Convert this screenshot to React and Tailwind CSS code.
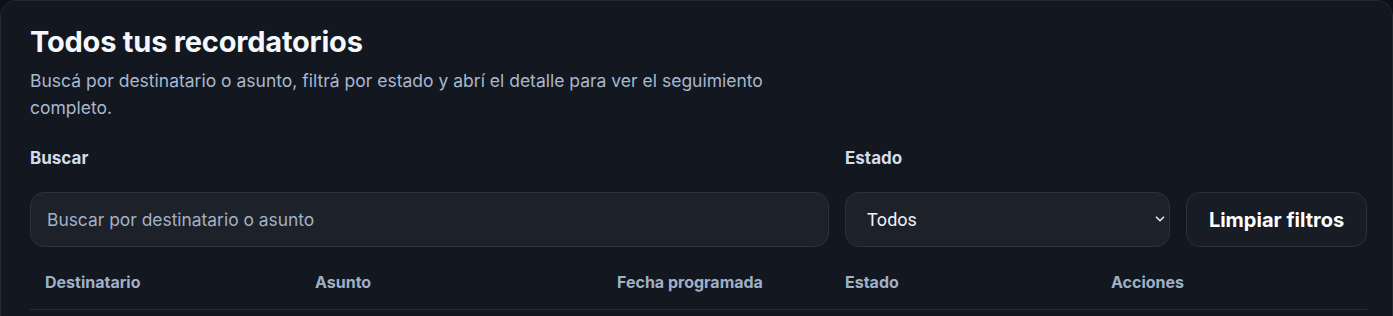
import React, { useState } from "react";
import { ChevronDown } from "lucide-react";

const columns = [
  { label: "Destinatario", width: "w-[270px]" },
  { label: "Asunto", width: "w-[302px]" },
  { label: "Fecha programada", width: "w-[228px]" },
  { label: "Estado", width: "w-[266px]" },
  { label: "Acciones", width: "" },
];

const App = () => {
  const [query, setQuery] = useState("");
  const [status, setStatus] = useState("todos");

  const clearFilters = () => {
    setQuery("");
    setStatus("todos");
  };

  return (
    <div className="h-[316px] overflow-hidden bg-[#0d1017] font-['Inter','Liberation_Sans',sans-serif]">
      <section className="min-h-[340px] rounded-2xl border border-[#232833] bg-[#121720] pl-[29px] pr-[25px] pt-[23px]">
        <h1 className="text-[29px] font-bold leading-[36px] tracking-[-0.2px] text-[#f5f7fb]">
          Todos tus recordatorios
        </h1>
        <p className="mt-[7px] max-w-[768px] text-[17.5px] leading-[27px] text-[#a9b8ce]">
          Buscá por destinatario o asunto, filtrá por estado y abrí el detalle para ver el seguimiento
          completo.
        </p>

        <div className="mt-[26px] flex items-end gap-4">
          <div className="flex w-[799px] flex-col">
            <label className="text-[17px] font-bold leading-[22px] text-[#d3dceb]">Buscar</label>
            <input
              value={query}
              onChange={(e) => setQuery(e.target.value)}
              placeholder="Buscar por destinatario o asunto"
              className="mt-[23px] h-[55px] rounded-[14px] border border-[#2c313c] bg-[#1d212a] px-4 text-[17.4px] text-[#e2e8f0] outline-none placeholder:text-[#a3b1c6]"
            />
          </div>

          <div className="flex w-[325px] flex-col">
            <label className="text-[17px] font-bold leading-[22px] text-[#d3dceb]">Estado</label>
            <div className="relative mt-[23px]">
              <select
                value={status}
                onChange={(e) => setStatus(e.target.value)}
                className="h-[55px] w-full appearance-none rounded-[14px] border border-[#2c313c] bg-[#1d212a] pl-[21px] font-['Roboto','Liberation_Sans',sans-serif] text-[18px] text-[#eef2f7] outline-none"
              >
                <option value="todos">Todos</option>
                <option value="pendiente">Pendiente</option>
                <option value="enviado">Enviado</option>
              </select>
              <ChevronDown
                size={14}
                strokeWidth={3}
                className="pointer-events-none absolute right-[3px] top-[20px] text-[#dfe4ec]"
              />
            </div>
          </div>

          <button
            onClick={clearFilters}
            className="h-[55px] flex-1 rounded-[14px] border border-[#2c313c] bg-[#181c25] text-[20px] font-bold text-white"
          >
            Limpiar filtros
          </button>
        </div>

        <table className="mt-[8px] w-full border-collapse">
          <thead>
            <tr className="border-b border-[#262b35]">
              {columns.map((col) => (
                <th
                  key={col.label}
                  className={`${col.width} pl-[15px] pb-[17px] pt-[17px] text-left text-[16px] font-bold leading-[20px] text-[#9fb0c8]`}
                >
                  {col.label}
                </th>
              ))}
            </tr>
          </thead>
        </table>
      </section>
    </div>
  );
};

export default App;
